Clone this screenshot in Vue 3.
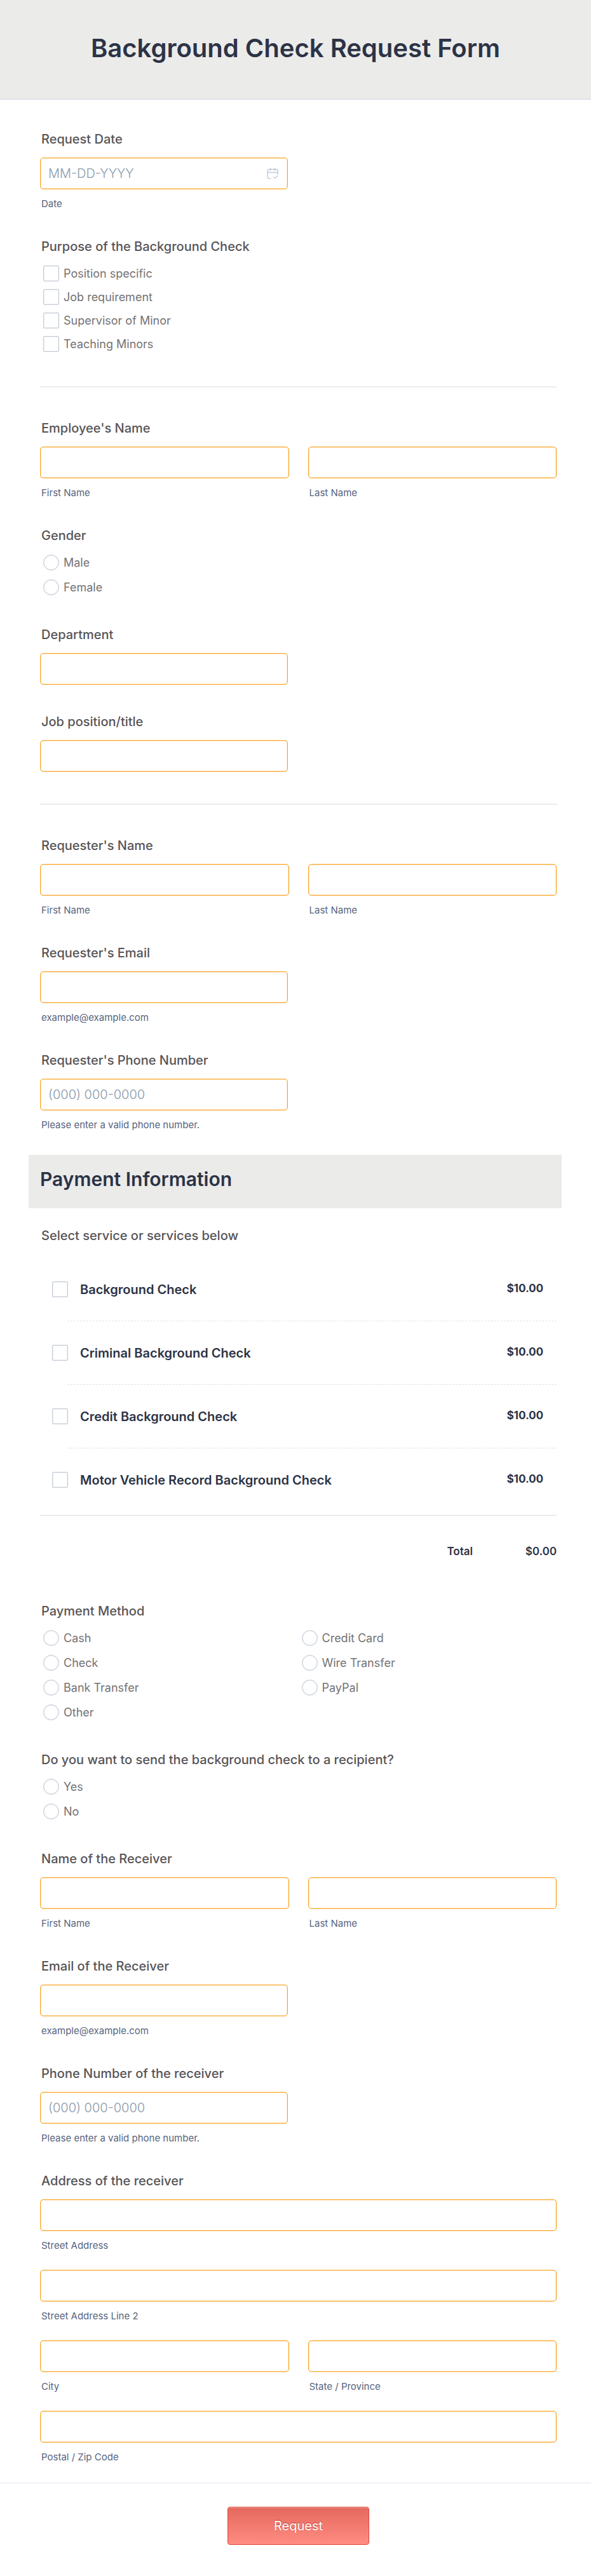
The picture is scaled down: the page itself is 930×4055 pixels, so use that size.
<script setup>
import { ref, computed } from 'vue'

const before = [
  { id: 'date', type: 'text', label: 'Request Date', placeholder: 'MM-DD-YYYY', hint: 'Date', calendar: true },
  {
    id: 'purpose',
    type: 'checkbox',
    label: 'Purpose of the Background Check',
    options: ['Position specific', 'Job requirement', 'Supervisor of Minor', 'Teaching Minors'],
  },
  { id: 'rule-1', type: 'rule' },
  { id: 'employee', type: 'group', label: "Employee's Name", parts: ['First Name', 'Last Name'] },
  { id: 'gender', type: 'radio', label: 'Gender', options: ['Male', 'Female'] },
  { id: 'department', type: 'text', label: 'Department' },
  { id: 'position', type: 'text', label: 'Job position/title' },
  { id: 'rule-2', type: 'rule' },
  { id: 'requester', type: 'group', label: "Requester's Name", parts: ['First Name', 'Last Name'] },
  { id: 'requester-email', type: 'text', input: 'email', label: "Requester's Email", hint: 'example@example.com' },
  {
    id: 'requester-phone',
    type: 'text',
    input: 'tel',
    label: "Requester's Phone Number",
    placeholder: '(000) 000-0000',
    hint: 'Please enter a valid phone number.',
  },
]

const after = [
  {
    id: 'method',
    type: 'radio',
    label: 'Payment Method',
    columns: true,
    options: ['Cash', 'Credit Card', 'Check', 'Wire Transfer', 'Bank Transfer', 'PayPal', 'Other'],
  },
  { id: 'send', type: 'radio', label: 'Do you want to send the background check to a recipient?', options: ['Yes', 'No'] },
  { id: 'receiver', type: 'group', label: 'Name of the Receiver', parts: ['First Name', 'Last Name'] },
  { id: 'receiver-email', type: 'text', input: 'email', label: 'Email of the Receiver', hint: 'example@example.com' },
  {
    id: 'receiver-phone',
    type: 'text',
    input: 'tel',
    label: 'Phone Number of the receiver',
    placeholder: '(000) 000-0000',
    hint: 'Please enter a valid phone number.',
  },
  {
    id: 'address',
    type: 'group',
    label: 'Address of the receiver',
    parts: ['Street Address', 'Street Address Line 2', 'City', 'State / Province', 'Postal / Zip Code'],
    wide: ['Street Address', 'Street Address Line 2', 'Postal / Zip Code'],
  },
]

const sections = [
  { id: 'request', fields: before },
  { id: 'payment', fields: after },
]

const products = [
  { name: 'Background Check', price: 10 },
  { name: 'Criminal Background Check', price: 10 },
  { name: 'Credit Background Check', price: 10 },
  { name: 'Motor Vehicle Record Background Check', price: 10 },
]

const cart = ref([])
const money = (n) => '$' + n.toFixed(2)
const total = computed(() =>
  products.filter((p) => cart.value.includes(p.name)).reduce((sum, p) => sum + p.price, 0)
)
</script>

<template>
  <form class="page" @submit.prevent>
    <header class="masthead">
      <h1>Background Check Request Form</h1>
    </header>

    <main class="body">
      <template v-for="section in sections" :key="section.id">
        <template v-if="section.id === 'payment'">
          <h2 class="section-title">Payment Information</h2>
          <fieldset class="products">
            <legend class="title">Select service or services below</legend>
            <ul>
              <li v-for="(p, i) in products" :key="p.name">
                <div class="product">
                  <input :id="`product-${i}`" v-model="cart" class="tick" type="checkbox" :value="p.name" />
                  <label class="product-name" :for="`product-${i}`">{{ p.name }}</label>
                  <span class="price">{{ money(p.price) }}</span>
                </div>
              </li>
            </ul>
            <div class="total">
              <span>Total</span>
              <output>{{ money(total) }}</output>
            </div>
          </fieldset>
        </template>

        <div class="stack">
          <template v-for="f in section.fields" :key="f.id">
            <hr v-if="f.type === 'rule'" class="rule" />

            <div v-else-if="f.type === 'text'">
              <label class="title" :for="f.id">{{ f.label }}</label>
              <div class="single">
                <input
                  :id="f.id"
                  class="box"
                  :type="f.input || 'text'"
                  :placeholder="f.placeholder"
                  :aria-describedby="f.hint ? `${f.id}-hint` : undefined"
                />
                <svg v-if="f.calendar" class="calendar" viewBox="0 0 18 18" aria-hidden="true">
                  <path
                    d="M6 17H3.500A2.500 2.500 0 0 1 1 14.500V5A2.500 2.500 0 0 1 3.500 2.500H14.500A2.500 2.500 0 0 1 17 5V10.500M1 7.500H17M5.500 .5V4.500M12.500 .5V4.500M10.500 14.500L12.800 16.500L17 13"
                  />
                </svg>
              </div>
              <p v-if="f.hint" :id="`${f.id}-hint`" class="hint">{{ f.hint }}</p>
            </div>

            <fieldset v-else-if="f.type === 'group'">
              <legend class="title">{{ f.label }}</legend>
              <div class="parts">
                <div v-for="(part, i) in f.parts" :key="part" :class="{ wide: f.wide?.includes(part) }">
                  <input :id="`${f.id}-${i}`" class="box" type="text" />
                  <label class="hint" :for="`${f.id}-${i}`">{{ part }}</label>
                </div>
              </div>
            </fieldset>

            <fieldset v-else>
              <legend class="title">{{ f.label }}</legend>
              <div class="options" :class="[f.type, { columns: f.columns }]">
                <label v-for="o in f.options" :key="o" class="option">
                  <input class="tick" :type="f.type" :name="f.id" :value="o" />
                  <span>{{ o }}</span>
                </label>
              </div>
            </fieldset>
          </template>
        </div>
      </template>
    </main>

    <footer class="actions">
      <button type="submit">Request</button>
    </footer>
  </form>
</template>

<style>
body {
  background: #fff;
}
</style>

<style scoped>
.page,
.page * {
  box-sizing: border-box;
}
.page {
  font-family: Inter, "Liberation Sans", sans-serif;
  color: #2c3345;
  background: #fff;
}
.masthead {
  padding: 52px 20px 55px;
  border-bottom: 2px solid #dfe2ea;
  background: #ebebea;
  text-align: center;
}
h1 {
  margin: 0;
  font-size: 40px;
  line-height: 48px;
  font-weight: 600;
}
.body {
  padding: 50px 54px 31px 63px;
}
.stack {
  display: flex;
  flex-direction: column;
  gap: 46px;
}
fieldset {
  min-width: 0;
  margin: 0;
  padding: 0;
  border: 0;
}
.title {
  display: block;
  padding: 0 2px 17px;
  color: #575457;
  font-size: 20px;
  line-height: 24px;
  font-weight: 500;
}
.rule {
  width: 100%;
  height: 2px;
  margin: 4px 0 6px;
  border: 0;
  background: #ececec;
}
.single {
  position: relative;
  width: 48%;
}
.box {
  display: block;
  width: 100%;
  height: 50px;
  padding: 0 12px;
  border: 1px solid #f9a526;
  border-radius: 5px;
  background: #fff;
  box-shadow: inset 0 0 0 1px rgba(251, 168, 46, 0.3);
  color: #2c3345;
  font-family: inherit;
  font-size: 20px;
  font-weight: 300;
}
.box::placeholder {
  color: #8999a9;
  opacity: 1;
}
.calendar {
  position: absolute;
  top: 16px;
  right: 15px;
  width: 18px;
  height: 18px;
  fill: none;
  stroke: #c3cad8;
  stroke-width: 1.5;
  stroke-linecap: round;
  stroke-linejoin: round;
}
.hint {
  display: block;
  margin: 14px 0 0;
  padding-left: 2px;
  color: #57647e;
  font-size: 15px;
  line-height: 18px;
}
.parts {
  display: grid;
  grid-template-columns: 1fr 1fr;
  gap: 29px 30px;
}
.wide {
  grid-column: 1 / -1;
}
.options {
  display: grid;
  row-gap: 12px;
  padding: 1px 0 4px;
}
.options.radio {
  row-gap: 14px;
}
.options.columns {
  grid-template-columns: 1fr 1fr;
}
.option {
  display: flex;
  align-items: center;
  gap: 7px;
  height: 25px;
  padding-left: 5px;
  color: #757273;
  font-size: 18px;
}
.tick {
  appearance: none;
  flex: none;
  width: 25px;
  height: 25px;
  margin: 0;
  border: 1px solid #c3cad8;
  border-radius: 2px;
  background: #fff;
  box-shadow: inset 0 0 0 1px rgba(195, 202, 216, 0.3);
}
.tick[type="radio"] {
  border-radius: 50%;
}
.tick:checked {
  background: #f9ad42;
}
.section-title {
  margin: 38px -8px 31px -18px;
  padding: 20px 18px 28px;
  background: #ebebea;
  font-size: 30px;
  line-height: 36px;
  font-weight: 600;
}
.products {
  margin-bottom: 72px;
}
.products ul {
  margin: 0;
  padding: 6px 0 0;
  list-style: none;
}
.product {
  display: flex;
  align-items: center;
  height: 99px;
  padding: 0 21px 0 19px;
}
.products li::after {
  content: "";
  display: block;
  margin-left: 43px;
  border-top: 1px dashed #dfe2ea;
}
.products li:last-child::after {
  border-top-color: transparent;
}
.product-name {
  flex: 1;
  padding-left: 19px;
  font-size: 20px;
  line-height: 24px;
  font-weight: 600;
}
.price {
  padding-bottom: 4px;
  font-size: 17px;
  line-height: 20px;
  font-weight: 700;
}
.total {
  display: flex;
  justify-content: flex-end;
  margin-top: 5px;
  padding-top: 46px;
  border-top: 1px solid #d9dbe5;
  font-size: 17px;
  line-height: 20px;
  font-weight: 600;
}
.total output {
  min-width: 132px;
  text-align: right;
}
.actions {
  display: flex;
  justify-content: center;
  padding: 37px 54px 49px 63px;
  border-top: 1px solid #e2e5ee;
}
button {
  height: 60px;
  padding: 0 72px;
  border: 1px solid #e0443a;
  border-radius: 4px;
  background: linear-gradient(#e4685d, #ff8c82);
  box-shadow: inset 0 1px 0 #efb0a5;
  color: #fff;
  font-family: inherit;
  font-size: 20px;
  text-shadow: 0 -1px 1px #b23e35;
}
</style>
